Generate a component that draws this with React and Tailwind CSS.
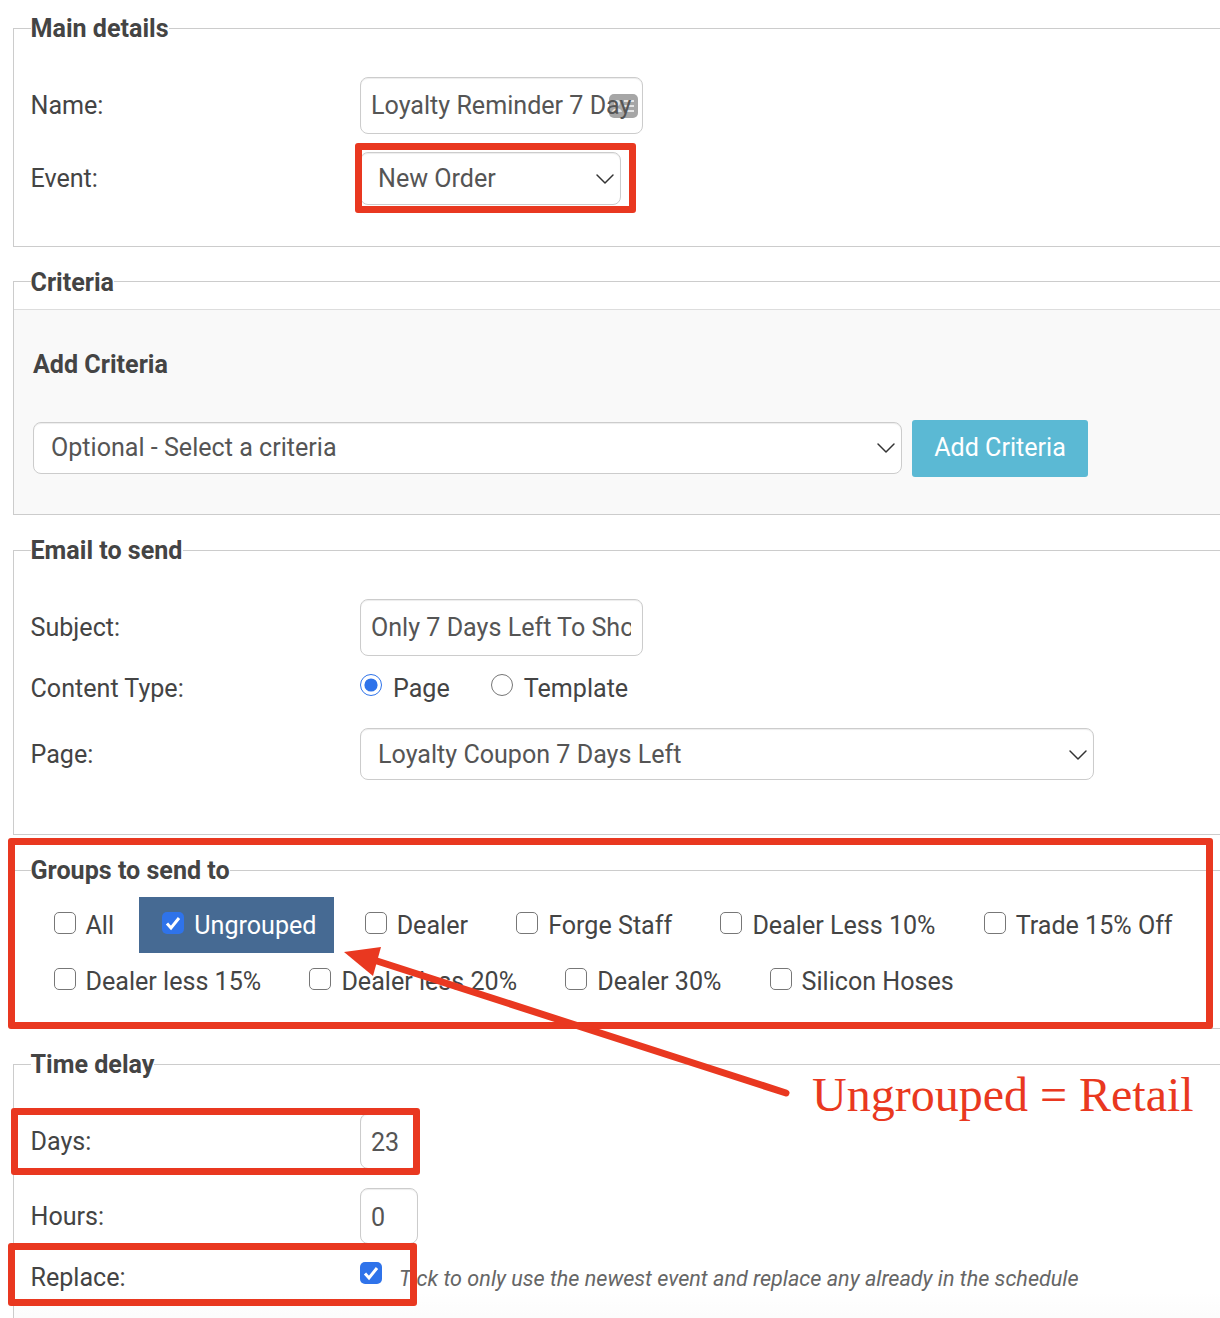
import { ChevronDown } from "lucide-react";

const inputCls = "relative h-full w-full rounded-[8px] border border-[#ccc] pl-[10px] text-[25.1px] text-[#555] shadow-[inset_0_1px_1px_rgba(0,0,0,0.075)] outline-none";
const selectCls = "flex items-center justify-between rounded-[8px] border border-[#ccc] bg-white pl-[17px] text-[25.1px] text-[#555] shadow-[inset_0_1px_1px_rgba(0,0,0,0.075)]";

const Legend = ({ children, className = "" }) => (
    <legend className={`h-[30px] pt-[2px] text-[25.1px] leading-[28px] font-bold text-[#444] ${className}`}>{children}</legend>
);

const Row = ({ label, low, className = "", children }) => (
    <div className={`flex items-center ${className}`}>
        <label className={`w-[329.5px] shrink-0 ${low ? "pt-[2px]" : ""}`}>{label}</label>
        {children}
    </div>
);

const Select = ({ value, className = "" }) => (
    <div className={`${selectCls} ${className}`}>
        <span>{value}</span>
        <ChevronDown size={32} strokeWidth={1.1} className="translate-x-[1px] text-[#333]" />
    </div>
);

const Checkbox = ({ checked, className = "" }) => (
    <span className={`relative flex h-[22px] w-[22px] shrink-0 ${className}`}>
        <input type="checkbox" defaultChecked={checked} className="h-full w-full appearance-none rounded-[5px] border-[1.5px] border-[#777] bg-white checked:border-0 checked:bg-[#2f73ea]" />
        {checked && (
            <svg className="pointer-events-none absolute inset-0" width="22" height="22" viewBox="0 0 22 22">
                <path d="M5 11.5 9 16l8-10" fill="none" stroke="#fff" strokeWidth="3" />
            </svg>
        )}
    </span>
);

const Group = ({ name, checked }) => (
    <label className={`flex h-[56px] items-center gap-[10px] pl-[23px] pr-[18px] ${checked ? "bg-[#466a93] text-white" : ""}`}>
        <Checkbox checked={checked} className="-translate-y-[2px]" />
        <span className="pt-[2px]">{name}</span>
    </label>
);

const groups = ["All", "Ungrouped", "Dealer", "Forge Staff", "Dealer Less 10%", "Trade 15% Off", "Dealer less 15%", "Dealer less 20%", "Dealer 30%", "Silicon Hoses"];

// red marks drawn over the screenshot
const Annotations = () => (
    <div className="pointer-events-none absolute inset-0 z-10">
        <div className="absolute left-[355px] top-[143px] h-[70px] w-[281px] rounded-[3px] border-[7px] border-[#e93820]"></div>
        <div className="absolute left-[8px] top-[838px] h-[191px] w-[1205px] rounded-[3px] border-[7px] border-[#e93820]"></div>
        <div className="absolute left-[11px] top-[1108px] h-[67px] w-[409px] rounded-[3px] border-[7px] border-[#e93820]"></div>
        <div className="absolute left-[8px] top-[1243px] h-[63px] w-[409px] rounded-[3px] border-[7px] border-[#e93820]"></div>
        <svg className="absolute inset-0" width="1220" height="1318">
            <line x1="377" y1="961" x2="786" y2="1093" stroke="#e93820" strokeWidth="7" strokeLinecap="round" />
            <polygon points="344,952 381,947 373,976" fill="#e93820" />
        </svg>
        <div className="absolute left-[812px] top-[1067px] font-['Liberation_Serif',serif] text-[48px] leading-[55px] whitespace-nowrap text-[#e93820]">Ungrouped = Retail</div>
    </div>
);

export default function App() {
    return (
        <div className="relative h-[1318px] w-[1220px] overflow-hidden bg-white font-['Roboto',sans-serif] text-[25.1px] text-[#444]">
            <Annotations />

            <fieldset className="ml-[13px] mr-[-4px] mt-[13px] border border-[#ccc] pb-[41px] pl-[16.5px]">
                <Legend>Main details</Legend>
                <Row label="Name:" className="mt-[34px] h-[57px]">
                    <div className="relative h-full w-[283px]">
                        <svg className="absolute left-[249px] top-[17px]" width="29" height="24" viewBox="0 0 29 24">
                            <rect width="29" height="24" rx="5" fill="#a6a6a6" />
                            <path d="M15 7h10M15 12h10M15 17h10" stroke="#e4e4e4" strokeWidth="2" />
                            <circle cx="8" cy="9" r="3" fill="#e4e4e4" />
                            <path d="M3 18c1-5 9-5 10 0z" fill="#e4e4e4" />
                        </svg>
                        <input className={`${inputCls} pr-[6px]`} defaultValue="Loyalty Reminder 7 Day" />
                    </div>
                </Row>
                <Row label="Event:" className="mt-[18px] h-[53px]">
                    <Select value="New Order" className="h-full w-[261px]" />
                </Row>
            </fieldset>

            <fieldset className="ml-[13px] mr-[-4px] mt-[19px] border border-[#ccc]">
                <Legend className="ml-[16.5px] translate-y-[1px]">Criteria</Legend>
                <div className="mt-[13px] border-t border-[#ddd] bg-[#f9f9f9] pb-[37px] pl-[19px] pt-[40px]">
                    <h4 className="text-[25.1px] leading-[30px] font-bold text-[#444]">Add Criteria</h4>
                    <div className="mt-[40px] flex items-start gap-[10px]">
                        <Select value="Optional - Select a criteria" className="mt-[2px] h-[52px] w-[869px]" />
                        <button className="h-[57px] w-[176px] rounded-[3px] bg-[#5bb9d4] pb-[2px] text-white">Add Criteria</button>
                    </div>
                </div>
            </fieldset>

            <fieldset className="ml-[13px] mr-[-4px] mt-[20px] border border-[#ccc] pb-[54px] pl-[16.5px]">
                <Legend>Email to send</Legend>
                <Row label="Subject:" className="mt-[34px] h-[57px]">
                    <div className="h-full w-[283px]">
                        <input className={`${inputCls} pr-[11px]`} defaultValue="Only 7 Days Left To Shop" />
                    </div>
                </Row>
                <Row label="Content Type:" low className="mt-[17px] h-[30px]">
                    <label className="flex items-center gap-[11px]">
                        <input type="radio" name="contentType" defaultChecked className="h-[22px] w-[22px] -translate-y-[3px] accent-[#2f73ea]" />
                        <span className="pt-[2px]">Page</span>
                    </label>
                    <label className="ml-[41px] flex items-center gap-[11px]">
                        <input type="radio" name="contentType" className="h-[22px] w-[22px] -translate-y-[3px]" />
                        <span className="pt-[2px]">Template</span>
                    </label>
                </Row>
                <Row label="Page:" low className="mt-[25px] h-[52px]">
                    <Select value="Loyalty Coupon 7 Days Left" className="h-full w-[734px] pt-[2px]" />
                </Row>
            </fieldset>

            <fieldset className="ml-[13px] mr-[-4px] mt-[20px] border border-[#ccc] pb-[19px] pl-[16.5px]">
                <Legend>Groups to send to</Legend>
                <div className="mt-[12px] flex w-[1180px] flex-wrap gap-x-[7.2px]">
                    {groups.map((group) => (
                        <Group key={group} name={group} checked={group === "Ungrouped"} />
                    ))}
                </div>
            </fieldset>

            <fieldset className="ml-[13px] mr-[-4px] mt-[20px] border border-[#ccc] pl-[16.5px]">
                <Legend>Time delay</Legend>
                <Row label="Days:" low className="mt-[34px] h-[56px]">
                    <div className="h-full w-[58px]">
                        <input className={`${inputCls} pr-[4px] pt-[2px]`} defaultValue="23" />
                    </div>
                </Row>
                <Row label="Hours:" low className="mt-[19px] h-[56px]">
                    <div className="h-full w-[58px]">
                        <input className={`${inputCls} pr-[4px] pt-[2px]`} defaultValue="0" />
                    </div>
                </Row>
                <Row label="Replace:" low className="mt-[18px] h-[30px]">
                    <Checkbox checked className="-translate-y-[4px]" />
                    <span className="ml-[17px] pt-[4px] text-[21.6px] italic text-[#666]">Tick to only use the newest event and replace any already in the schedule</span>
                </Row>
                <div className="-ml-[16.5px] h-[40px] bg-gradient-to-b from-white to-[#fafafa]"></div>
            </fieldset>
        </div>
    );
}
